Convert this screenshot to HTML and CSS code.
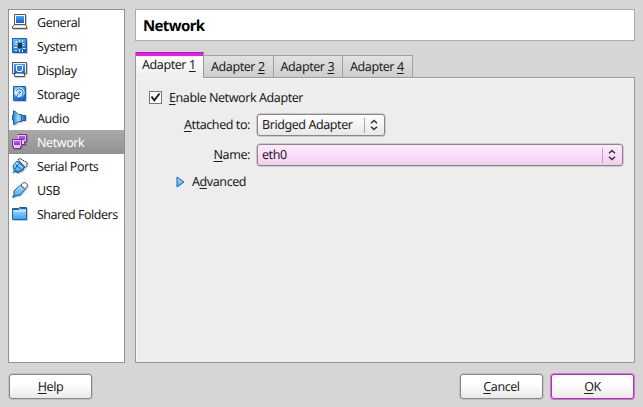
FILE: index.html
```html
<!DOCTYPE html>
<html lang="en">
<head>
<meta charset="utf-8">
<title>Settings</title>
<link rel="stylesheet" href="styles.css">
</head>
<body>
<svg width="0" height="0" class="defs">
  <defs>
    <linearGradient id="blue" x1="0" y1="0" x2="0.6" y2="1"><stop offset="0" stop-color="#7cc4fb"/><stop offset="1" stop-color="#1263d6"/></linearGradient>
    <linearGradient id="screen" x1="0" y1="0" x2="0" y2="1"><stop offset="0" stop-color="#45a0fb"/><stop offset="1" stop-color="#0f60de"/></linearGradient>
    <linearGradient id="folder" x1="0" y1="0" x2="0" y2="1"><stop offset="0" stop-color="#b4e3ff"/><stop offset="1" stop-color="#35a3f5"/></linearGradient>
    <linearGradient id="horn" x1="0" y1="0" x2="1" y2="0"><stop offset="0" stop-color="#1470cc"/><stop offset=".45" stop-color="#a5dcff"/><stop offset="1" stop-color="#1d74d0"/></linearGradient>
    <linearGradient id="violet" x1="0" y1="0" x2="0" y2="1"><stop offset="0" stop-color="#c45cff"/><stop offset="1" stop-color="#8a2bf0"/></linearGradient>
  </defs>
</svg>
<div class="dialog">
  <main class="content">
    <nav class="sidebar">
      <div class="item"><svg viewBox="0 0 16 16"><path d="M2.500.5h11v10h-11z" fill="#fff" stroke="#555"/><path d="M4 2h8v7H4z" fill="url(#screen)"/><path d="M2.500 10.500h11l1 2v2H.5v-2z" fill="#ddd" stroke="#555"/><path d="M2 12.500h12" stroke="#fff"/></svg><span>General</span></div>
      <div class="item"><svg viewBox="0 0 16 16"><path d="M.5.5h14v14H.5z" fill="url(#blue)" stroke="#1762b5"/><path d="M3 4.500h2m-2 2h2m-3 3h3m-2 3h2M4.500 3v2m3-3v2m3-2v2m0 1.500h2m-2 2h2m-2 3h3M7.500 11v3m3-2v2" stroke="#d8f2ff"/><path d="M6 5h4v5H6z" fill="#29343f"/></svg><span>System</span></div>
      <div class="item"><svg viewBox="0 0 16 16"><path d="M.5.5h14v11H.5z" fill="#eee" stroke="#555"/><path d="M2 2h11v9H2z" fill="url(#screen)"/><path d="M4.500 3.500h6v5h-1v1h-4v-1h-1z" fill="#2b83ee" stroke="#fff"/><path d="M4 11.500H2.500v3h10v-3H11" fill="#eee" stroke="#555"/><path d="M4 12.500h7" stroke="#fff"/></svg><span>Display</span></div>
      <div class="item"><svg viewBox="0 0 16 16"><path d="M1.500.5h12v14h-12z" fill="url(#blue)" stroke="#1762b5"/><circle cx="7.500" cy="6.500" r="4.600" fill="#c8eaff" stroke="#eefaff"/><path d="M4 5c1-3 7-3 7 1.500S7.500 12 5 12.500M8.500 6c-1-1-2 0-1.500 1s2 0 1.500-1M6.500 8 3 12.500" fill="none" stroke="#1768bd"/></svg><span>Storage</span></div>
      <div class="item"><svg viewBox="0 0 16 16"><path d="M1.500.7C3 1 6 4 6.500 4.500h3v1h4v5h-4v1h-3c-1.500 1-3.500 2.800-5 3V10H.5V5h1z" fill="url(#horn)" stroke="#1762a8"/><path d="M9.500 5v6M12 6v4" stroke="#1762a8"/></svg><span>Audio</span></div>
      <div class="item selected"><svg viewBox="0 0 16 16"><path d="M5.500.5h9v7h-2v2h1v1h-6" fill="#f2c5f4" stroke="#763087"/><path d="M7 2h6v4H7z" fill="url(#violet)"/><path d="M.5 5.500h9v7h-1v2h-7v-2h-1z" fill="#f2c5f4" stroke="#763087"/><path d="M2 7h6v4H2z" fill="url(#violet)"/></svg><span>Network</span></div>
      <div class="item"><svg viewBox="0 0 16 16"><path d="M6 1.500 8 .5l7 4v3l-2 2z" fill="#eee" stroke="#333" stroke-dasharray="2 .6"/><path d="M5 3 12.500 8.500 11 12l-5 2.500-4-1L.7 15M1 8l4-5 7.500 6-2 3L6 14 2 12z" fill="url(#folder)" stroke="#145a9e"/><path d="M4 7l5 4M7 5.500 3 11" stroke="#145a9e"/></svg><span>Serial Ports</span></div>
      <div class="item"><svg viewBox="0 0 16 16"><path d="M9 3 11 .7h2.500l1.800 1.800v2L12.500 7z" fill="#fff" stroke="#555"/><path d="M8.500 3 13 7.500 8 13l-5 1-2 1.500L.5 15 2 13V9z" fill="url(#folder)" stroke="#145a9e"/></svg><span>USB</span></div>
      <div class="item"><svg viewBox="0 0 16 16"><path d="M.5 13.500v-11h6l1-1h7v12z" fill="url(#folder)" stroke="#1762a8"/><path d="M1 3.500h6l1-1h6" fill="none" stroke="#1762a8"/><path d="M1.500 5h12.500" stroke="#dff4ff"/></svg><span class="shared">Shared Folders</span></div>
    </nav>
    <section class="page">
      <h1>Network</h1>
      <div class="tabs">
        <div class="tab active"><span>Adapter <u>1</u></span></div>
        <div class="tab"><span>Adapter <u>2</u></span></div>
        <div class="tab"><span>Adapter <u>3</u></span></div>
        <div class="tab"><span>Adapter <u>4</u></span></div>
      </div>
      <div class="pane">
        <div class="enable"><span class="check"><svg viewBox="0 0 11 11"><path d="M1.500 4.500 4.300 8.300 9.500 1.500" fill="none" stroke="#222" stroke-width="2"/></svg></span><span><u>E</u>nable Network Adapter</span></div>
        <div class="field"><label><u>A</u>ttached to:</label><div class="combo attach"><span>Bridged Adapter</span><i></i><svg viewBox="0 0 8 12"><path d="M1 4.300 4 1.500 7 4.300M1 7.700 4 10.500 7 7.700"/></svg></div></div>
        <div class="field"><label><u>N</u>ame:</label><div class="combo pink"><span>eth0</span><i></i><svg viewBox="0 0 8 12"><path d="M1 4.300 4 1.500 7 4.300M1 7.700 4 10.500 7 7.700"/></svg></div></div>
        <div class="advanced"><svg viewBox="0 0 9 12"><path d="M1 1v10l7-5z" fill="url(#folder)" stroke="#1762b5"/></svg><span>A<u>d</u>vanced</span></div>
      </div>
    </section>
  </main>
  <footer>
    <div class="button"><u>H</u>elp</div>
    <div class="button cancel"><u>C</u>ancel</div>
    <div class="button ok"><u>O</u>K</div>
  </footer>
</div>
</body>
</html>
```
FILE: styles.css
```css
* { box-sizing: border-box; }
body { margin: 0; background: #d6d6d6; color: #1c1c1c; font: 12.5px/16px "Noto Sans", sans-serif; letter-spacing: -.43px; text-rendering: geometricPrecision; }
.defs { display: block; }
.dialog { width: 643px; height: 407px; padding: 9px 8px 0; }
.content { display: flex; gap: 10px; height: 354px; }
.sidebar { width: 117px; background: #fff; border: 1px solid #919191; }
.item { display: flex; align-items: center; height: 24px; padding-left: 3px; }
.item svg { width: 16px; height: 16px; margin-right: 9px; flex: none; overflow: visible; filter: drop-shadow(1px 1px 0 #0003); }
.item span { padding-top: 2px; }
.shared { letter-spacing: -.5px; }
.item.selected { color: #fff; background: linear-gradient(#a9a9a9, #929292); }
span { white-space: nowrap; }
u { text-decoration: underline; text-decoration-thickness: 1px; text-underline-offset: 2px; text-decoration-skip-ink: none; }
.page { width: 500px; display: flex; flex-direction: column; }
h1 { margin: 0 0 11px; height: 32px; padding: 0 7px; font-size: 15px; line-height: 32px; font-weight: 700; letter-spacing: -.65px; background: #fff; border: 1px solid #ababab; color: #000; }
.tabs { display: flex; align-items: flex-end; height: 26px; position: relative; z-index: 1; margin-bottom: -1px; }
.tab { width: 69.500px; height: 23px; padding-left: 7px; line-height: 21px; background: linear-gradient(#e2e2e2, #cdcdcd); border: 1px solid #a0a0a0; border-left: 0; border-bottom-color: #999; }
.tab.active { width: 69px; height: 26px; line-height: 24px; background: linear-gradient(#f316f3 3px, #fff 3px, #ededed); border: 1px solid #999; border-top-color: #9c2a9c; border-bottom: 0; padding: 0 0 0 6px; }
.pane { flex: 1; background: #ededed; border: 1px solid #999; box-shadow: inset 1px 1px #f8f8f8; padding: 12px 11px 0 12px; }
.enable { display: flex; align-items: center; height: 16px; }
.check { width: 13px; height: 13px; border: 1px solid #777; background: #fff; margin: -2px 7px 0 1px; display: flex; }
.check svg { width: 11px; height: 11px; }
.field { display: flex; align-items: center; height: 24px; margin-top: 7px; }
.field + .field { margin-top: 6px; }
label { width: 102px; text-align: right; margin-right: 7px; }
.combo { flex: 1; display: flex; align-items: center; height: 22px; border: 1px solid #888; border-radius: 3px; padding: 0 6px 0 4px; background: linear-gradient(#fff, #e8e8e8); box-shadow: 0 0 0 .5px #a8a8a8; }
.combo.attach { flex: none; width: 128px; }
.combo.pink { background: linear-gradient(#ffe9ff, #fbdcfb 55%, #ebd0eb); }
.combo i { width: 1px; height: 15px; margin-left: auto; margin-right: 5px; background: #aaa; }
.combo svg { width: 8px; height: 12px; }
.combo path { fill: none; stroke: #333; stroke-width: 1.500; }
.advanced { display: flex; align-items: center; height: 16px; margin: 7px 0 0 28px; }
.advanced svg { width: 9px; height: 12px; margin-right: 7px; }
footer { display: flex; margin-top: 11px; padding-left: 1px; }
.button { width: 83px; height: 25px; border: 1px solid #888; border-radius: 3px; background: linear-gradient(#fff 40%, #e9e9e9); text-align: center; line-height: 23px; box-shadow: 0 0 0 .5px #aaa; }
.cancel { margin-left: 368px; }
.ok { margin-left: 8px; border-color: #aa36ac; box-shadow: 0 0 0 1px #d66fd9; }
```
